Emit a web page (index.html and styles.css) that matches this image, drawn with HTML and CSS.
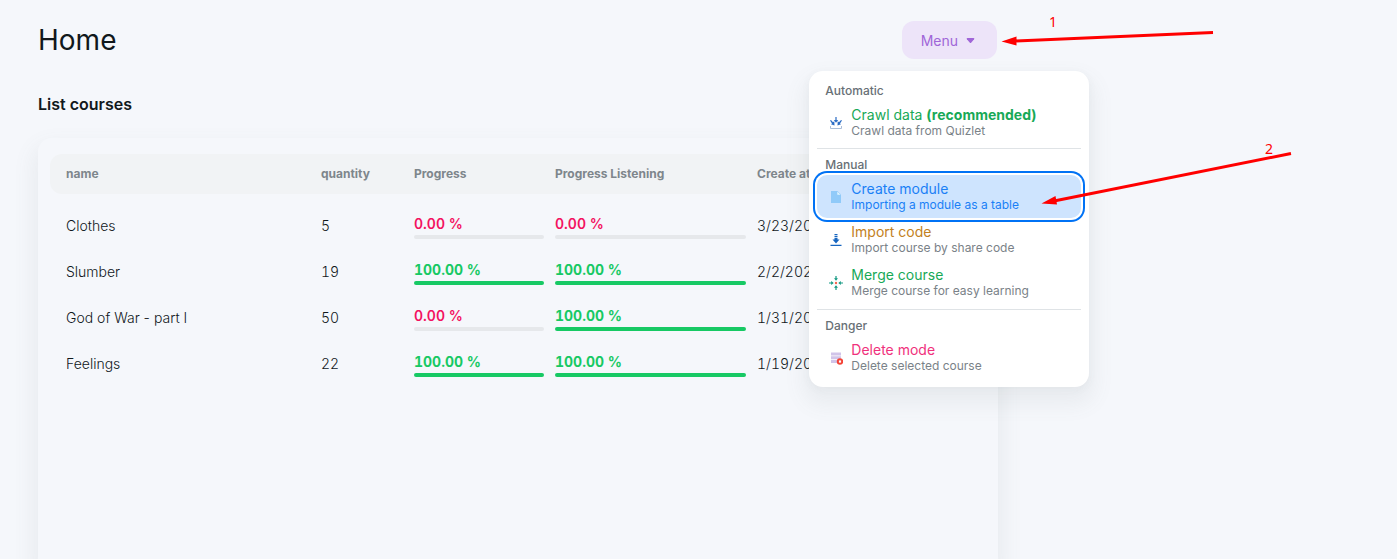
FILE: index.html
```html
<!DOCTYPE html>
<html lang="en">
<head>
<meta charset="utf-8">
<title>Home</title>
<link rel="stylesheet" href="styles.css">
</head>
<body>
<main class="page">
  <header class="topbar">
    <h1 class="title">Home</h1>
    <div class="menu">
      <button class="menu-button" type="button" aria-haspopup="menu" aria-expanded="true">Menu
        <svg class="caret" viewBox="0 0 8 5" aria-hidden="true"><path d="M1 0h6q1.3.2.6 1.2L4.6 4.7q-.6.5-1.2 0L.4 1.2Q-.3.2 1 0z" fill="currentColor"/></svg>
      </button>
      <div class="popover" role="menu">
        <section class="group">
          <h3 class="group-label">Automatic</h3>
          <button class="item item--success" type="button" role="menuitem">
            <svg class="item-icon" viewBox="0 0 14 14" aria-hidden="true"><path d="M1.500 10v2.500h11V10" fill="none" stroke="#a9bdd8"/><path d="M6.400 1h1.200v3H9.200L7 6.700 4.800 4h1.600zM1 4.500l1-.6 2 2.300 1.300-.9.200 4.200-3.500-1.200 1-.9zM13 4.500l-1-.6-2 2.300-1.300-.9-.2 4.200 3.500-1.200-1-.9z" fill="#2b6cc4"/></svg>
            <span class="item-text"><span class="item-title">Crawl data <b>(recommended)</b></span><span class="item-desc">Crawl data from Quizlet</span></span>
          </button>
        </section>
        <section class="group group--long">
          <h3 class="group-label">Manual</h3>
          <button class="item item--active" type="button" role="menuitem">
            <svg class="item-icon" viewBox="0 0 14 14" aria-hidden="true"><path d="M2 1h6.500L12 4.500V13H2z" fill="#90caf9"/><path d="M8.300 1.500v3.200h3.200z" fill="#e1f5fe"/></svg>
            <span class="item-text"><span class="item-title">Create module</span><span class="item-desc">Importing a module as a table</span></span>
          </button>
          <button class="item item--warning" type="button" role="menuitem">
            <svg class="item-icon" viewBox="0 0 14 14" aria-hidden="true"><path d="M5.500 1h3v1.200h-3zM5.500 3h3v1.200h-3zM5.500 5h3v1.500H10.500L7 10.500 3.500 6.500h2zM1.500 11.700h11V13h-11z" fill="#1565c0"/></svg>
            <span class="item-text"><span class="item-title">Import code</span><span class="item-desc">Import course by share code</span></span>
          </button>
          <button class="item item--success" type="button" role="menuitem">
            <svg class="item-icon" viewBox="0 0 14 14" aria-hidden="true"><path d="M6.400 0h1.200v2.200H9L7 4.700 5 2.200h1.400zM6.400 14h1.200v-2.200H9L7 9.300 5 11.800h1.400zM0 6.400v1.200h2.200V9L4.700 7 2.200 5v1.400zM14 6.400v1.200h-2.200V9L9.300 7l2.500-2v1.400z" fill="#159a83"/><circle cx="7" cy="7" r="1.200" fill="#f4664f"/></svg>
            <span class="item-text"><span class="item-title">Merge course</span><span class="item-desc">Merge course for easy learning</span></span>
          </button>
        </section>
        <section class="group">
          <h3 class="group-label">Danger</h3>
          <button class="item item--danger" type="button" role="menuitem">
            <svg class="item-icon" viewBox="0 0 14 14" aria-hidden="true"><path d="M2 1.500h10v3H2zM2 5.300h10v3H2zM2 9h10v3H2z" fill="#d1c4e9"/><circle cx="11" cy="10.500" r="3.200" fill="#f44336"/><path d="M10.100 9.600l1.800 1.800M11.900 9.600l-1.800 1.800" stroke="#fff" stroke-width="1.200"/></svg>
            <span class="item-text"><span class="item-title">Delete mode</span><span class="item-desc">Delete selected course</span></span>
          </button>
        </section>
      </div>
    </div>
  </header>
  <h2 class="subtitle">List courses</h2>
  <div class="card">
    <table class="courses">
      <colgroup><col class="col-name"><col class="col-quantity"><col class="col-progress"><col class="col-listening"><col></colgroup>
      <thead>
        <tr><th>name</th><th>quantity</th><th>Progress</th><th>Progress Listening</th><th>Create at</th></tr>
      </thead>
      <tbody>
        <tr>
          <td>Clothes</td><td>5</td>
          <td><label class="meter meter--none">0.00 %<progress max="100" value="0"></progress></label></td>
          <td><label class="meter meter--none">0.00 %<progress max="100" value="0"></progress></label></td>
          <td>3/23/2023</td>
        </tr>
        <tr>
          <td>Slumber</td><td>19</td>
          <td><label class="meter">100.00 %<progress max="100" value="100"></progress></label></td>
          <td><label class="meter">100.00 %<progress max="100" value="100"></progress></label></td>
          <td>2/2/2023</td>
        </tr>
        <tr>
          <td>God of War - part I</td><td>50</td>
          <td><label class="meter meter--none">0.00 %<progress max="100" value="0"></progress></label></td>
          <td><label class="meter">100.00 %<progress max="100" value="100"></progress></label></td>
          <td>1/31/2023</td>
        </tr>
        <tr>
          <td>Feelings</td><td>22</td>
          <td><label class="meter">100.00 %<progress max="100" value="100"></progress></label></td>
          <td><label class="meter">100.00 %<progress max="100" value="100"></progress></label></td>
          <td>1/19/2023</td>
        </tr>
      </tbody>
    </table>
  </div>
</main>
<svg class="callouts" width="1397" height="220" viewBox="0 0 1397 220">
  <g stroke="#f00" stroke-width="3"><path d="M1213 32.500L1014 41"/><path d="M1291 153.500L1054 201"/></g>
  <path d="M1001.500 41.500l15-5v9zM1041.500 203.500l14-7.500 1.500 8.500z" fill="#f00"/>
  <text x="1049" y="27">1</text>
  <text x="1265" y="154">2</text>
</svg>
</body>
</html>
```

FILE: styles.css
```css
* { box-sizing: border-box; }

body {
  margin: 0;
  background: #f5f7fb;
  color: #11181c;
  font-family: Inter, "Liberation Sans", sans-serif;
  font-size: 14px;
}

h1, h2, h3 { margin: 0; }

button {
  border: 0;
  font: inherit;
  cursor: pointer;
}

.page {
  display: flex;
  flex-direction: column;
  height: 100vh;
  max-width: 1036px;
  padding: 21px 38px 0;
}

.topbar {
  display: flex;
  align-items: center;
  justify-content: space-between;
  padding-right: 1px;
}

.title {
  font-size: 28px;
  font-weight: 400;
  line-height: 38px;
}

.menu { position: relative; }

.menu-button {
  display: flex;
  align-items: center;
  gap: 8px;
  height: 38px;
  padding: 0 22px 0 19px;
  border-radius: 12px;
  background: #ede4f9;
  color: #a066d8;
  font-weight: 400;
}

.caret { width: 9px; height: 5px; }

.popover {
  position: absolute;
  z-index: 2;
  top: 50px;
  left: 50%;
  width: 280px;
  transform: translateX(-50%);
  padding: 12px 8px 4px;
  border-radius: 14px;
  background: #fff;
  box-shadow: 0 12px 20px 6px rgb(104 112 118 / 8%), 0 2px 8px rgb(104 112 118 / 5%);
}

.group { padding-bottom: 4px; }
.group--long { padding-bottom: 5px; }

.group + .group {
  padding-top: 8px;
  border-top: 1px solid #dfe3e6;
}

.group-label {
  height: 18px;
  padding-left: 8px;
  color: #687076;
  font-size: 12px;
  font-weight: 500;
  line-height: 16px;
}

.item {
  display: flex;
  align-items: center;
  gap: 8px;
  width: 100%;
  height: 43px;
  padding: 0 12px;
  border-radius: 10px;
  background: none;
  color: #7a8288;
  text-align: left;
}

.item-icon { flex: none; width: 14px; height: 14px; }
.item-text { display: flex; flex-direction: column; }
.item-title { font-size: 14px; line-height: 16px; }
.item-title b { font-weight: 700; }
.item-desc { font-size: 12px; line-height: 15px; }

.item--success .item-title { color: #18a957; }
.item--warning .item-title { color: #c28122; }
.item--danger .item-title { color: #f0317c; }

.item--active {
  background: #cee4fe;
  color: #1a80f6;
  box-shadow: 0 0 0 2px #fff, 0 0 0 4px #0072f5;
}

.subtitle {
  margin-top: 34px;
  font-size: 16px;
  font-weight: 600;
  line-height: 22px;
}

.card {
  flex: 1;
  margin-top: 23px;
  padding: 16px 12px 0;
  border-radius: 14px 14px 0 0;
  background: #f5f7fb;
  box-shadow: 0 12px 20px 6px rgb(104 112 118 / 8%);
}

.courses {
  width: 100%;
  border-spacing: 0;
  table-layout: fixed;
}

.col-name { width: 266px; }
.col-quantity { width: 93px; }
.col-progress { width: 141px; }
.col-listening { width: 202px; }

th, td { padding: 0 6px 2px 5px; text-align: left; }
th:first-child, td:first-child { padding-left: 16px; }

th {
  height: 40px;
  background: #f1f3f5;
  color: #7e868c;
  font-size: 12px;
  font-weight: 700;
}

th:first-child { border-radius: 12px 0 0 12px; }
th:last-child { border-radius: 0 12px 12px 0; }

td {
  height: 46px;
  font-weight: 300;
}

td + td { font-variant-numeric: tabular-nums; }

tbody::before {
  content: "";
  display: block;
  height: 9px;
}

.meter {
  display: flex;
  flex-direction: column;
  gap: 3px;
  padding-top: 4px;
  color: #17c964;
  font-weight: 700;
  line-height: 16px;
}

.meter--none { color: #f31260; font-weight: 600; }

progress {
  display: block;
  width: 100%;
  height: 4px;
  border: 0;
  border-radius: 2px;
  overflow: hidden;
  appearance: none;
}

progress::-webkit-progress-bar { background: #e6e8eb; }
progress::-webkit-progress-value { background: #17c964; }

.callouts {
  position: absolute;
  z-index: 3;
  top: 0;
  left: 0;
  pointer-events: none;
}

.callouts text {
  fill: #f00;
  font: 14px "Noto Sans", sans-serif;
}
```
